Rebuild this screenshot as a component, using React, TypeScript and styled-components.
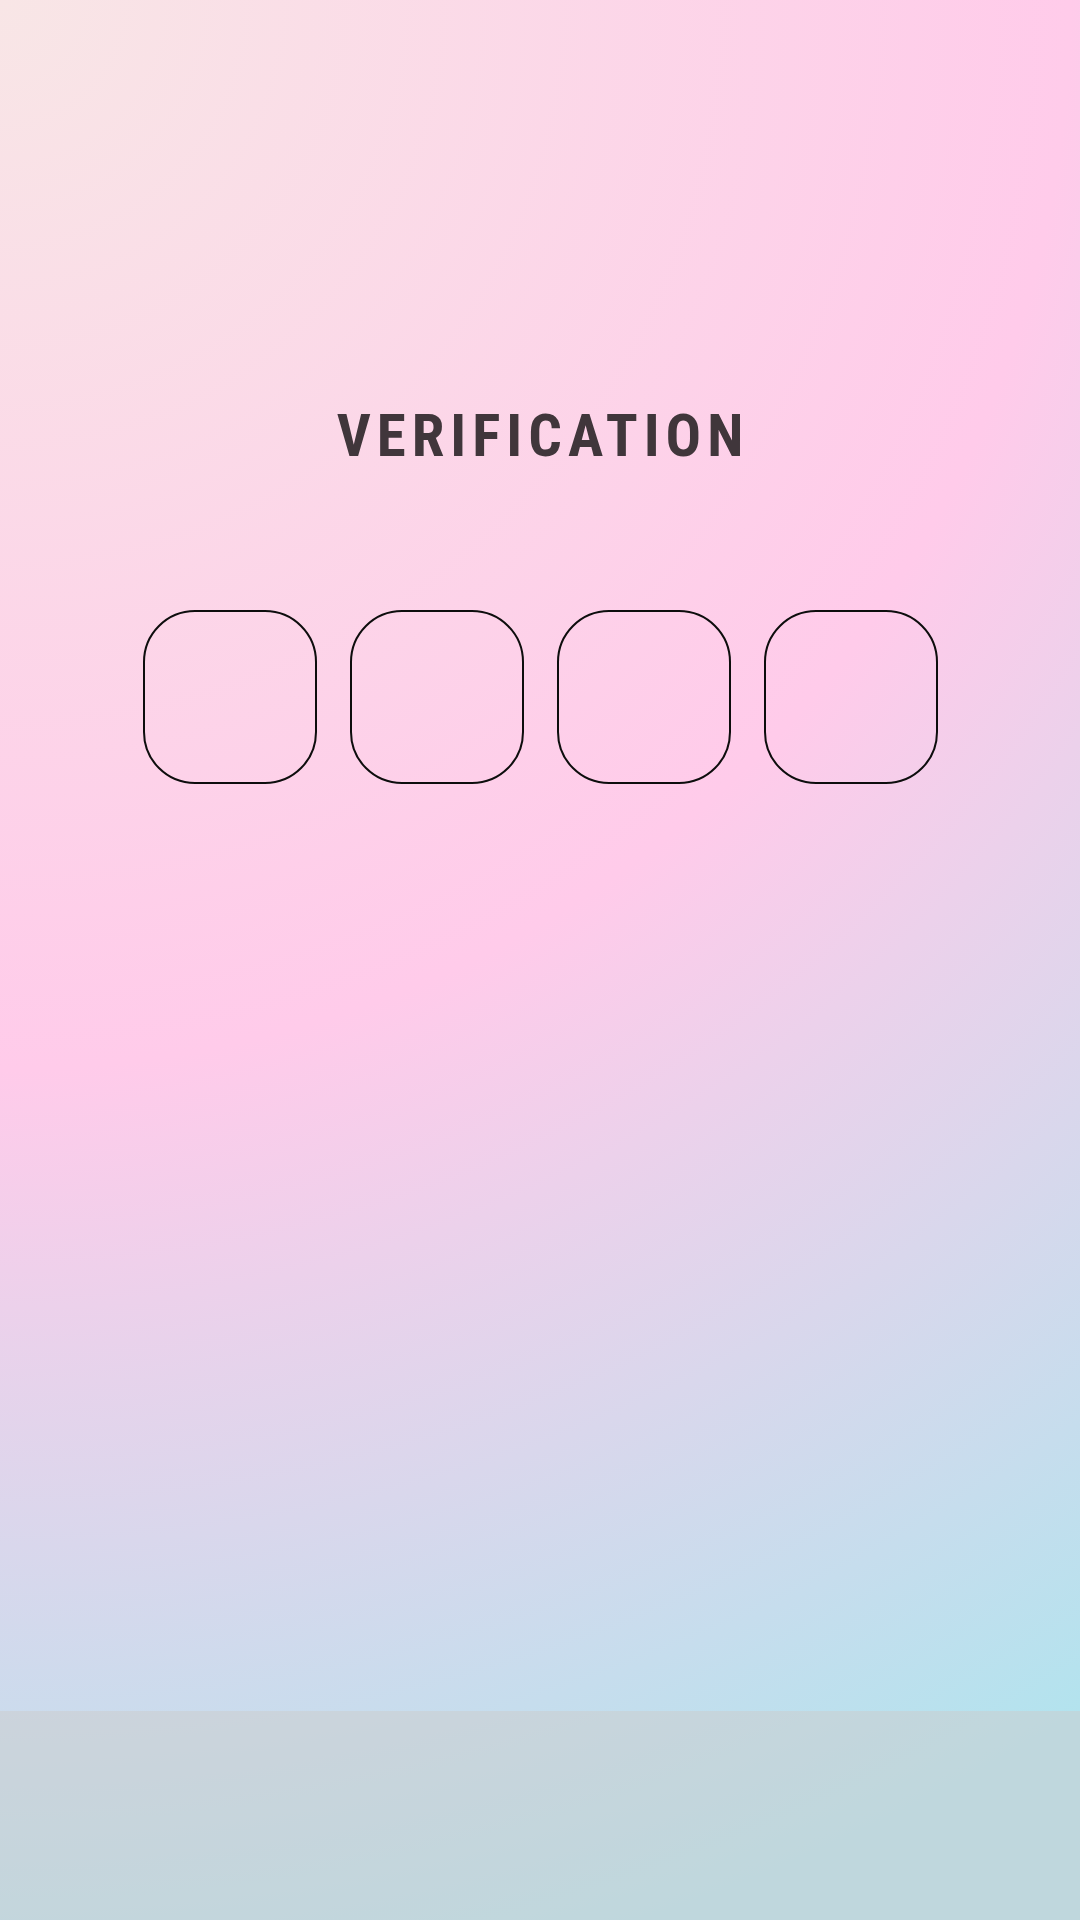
import React from "react";
import styled, { createGlobalStyle } from "styled-components";

const GlobalStyle = createGlobalStyle`
  html, body {
    margin: 0;
    padding: 0;
  }
  body {
    width: 1080px;
    height: 1920px;
    overflow: hidden;
    font-family: Roboto, "Liberation Sans", sans-serif;
  }
`;

const Screen = styled.div`
  width: 1080px;
  height: 1920px;
  display: flex;
  flex-direction: column;
  background: radial-gradient(
    circle at 0 0,
    #f8e6e6 0px,
    #ffcbea 1070px,
    #b3e3ee 2023px
  );
`;

const Main = styled.main`
  flex: 1;
  display: flex;
  flex-direction: column;
  align-items: center;
  padding-top: 406px;
`;

const Title = styled.h1`
  margin: 0;
  font-family: Roboto, "Liberation Sans", sans-serif;
  font-weight: 700;
  font-size: 59px;
  line-height: 59px;
  font-stretch: 75%;
  letter-spacing: 6px;
  margin-right: -6px;
  color: #40363b;
`;

const CodeRow = styled.div`
  margin-top: 145px;
  display: flex;
  gap: 33px;
`;

const CodeBox = styled.input`
  width: 174px;
  height: 174px;
  box-sizing: border-box;
  border: 2px solid #0d0d0d;
  border-radius: 52px;
  background: transparent;
  outline: none;
  padding: 0;
  text-align: center;
  font-family: Roboto, sans-serif;
  font-size: 64px;
  color: #40363b;
`;

const BottomBar = styled.div`
  height: 209px;
  background: rgba(203, 203, 203, 0.5);
`;

export default function App() {
  return (
    <>
      <GlobalStyle />
      <Screen>
        <Main>
          <Title>VERIFICATION</Title>
          <CodeRow>
            {[0, 1, 2, 3].map((i) => (
              <CodeBox key={i} maxLength={1} inputMode="numeric" aria-label={`digit ${i + 1}`} />
            ))}
          </CodeRow>
        </Main>
        <BottomBar />
      </Screen>
    </>
  );
}
